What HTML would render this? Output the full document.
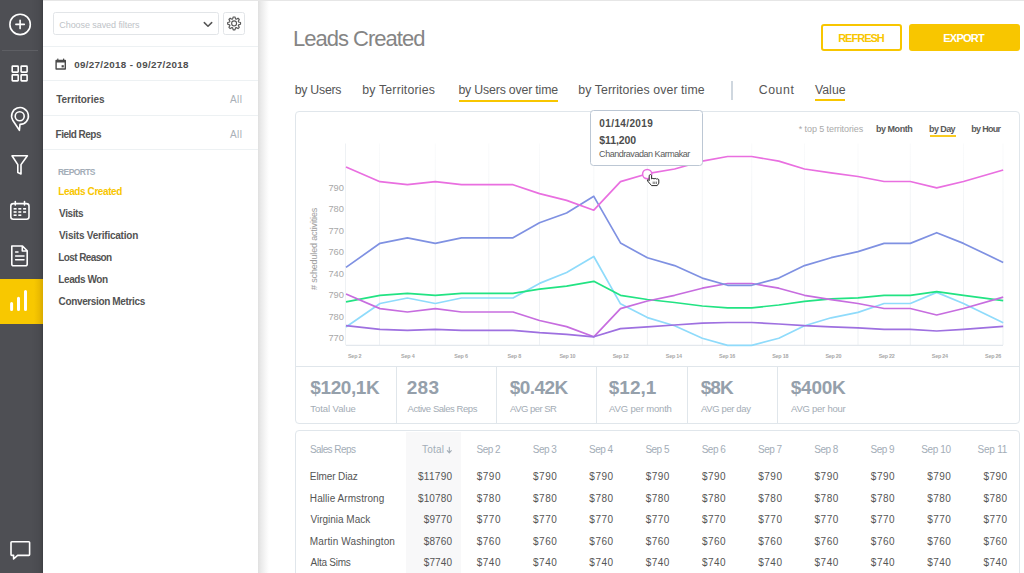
<!DOCTYPE html>
<html><head><meta charset="utf-8"><title>Leads Created</title>
<style>
html,body{margin:0;padding:0;}
body{width:1024px;height:573px;overflow:hidden;position:relative;background:#ffffff;font-family:"Liberation Sans",sans-serif;}
.a{position:absolute;box-sizing:border-box;}
.t{position:absolute;line-height:20px;white-space:pre;font-family:"Liberation Sans",sans-serif;}
svg{position:absolute;left:0;top:0;overflow:visible;}
</style></head><body>
<!-- sidebar panel shadow -->
<div class="a" style="left:258px;top:0;width:11px;height:573px;background:linear-gradient(to right,#e0e0e0,#ebebeb 30%,#f7f7f7 70%,#ffffff)"></div>
<!-- top hairline -->
<div class="a" style="left:0;top:0;width:1024px;height:1px;background:#e6e6e6"></div>
<!-- rail -->
<div class="a" style="left:0;top:0;width:43px;height:573px;background:linear-gradient(to right,#4e4f54 0,#4e4f54 31px,#4a4b50 39px,#454649 41.5px,#3f4045 42.5px,#4a4b50 43px)"></div>
<div class="a" style="left:2px;top:49.5px;width:36px;height:1px;background:#5e5f64"></div>
<div class="a" style="left:0;top:279px;width:43px;height:45px;background:linear-gradient(to right,#f8c800 0,#f8c800 34px,#ecbc00 39px,#dcad00 42.5px,#e8c040 43px)"></div>
<!-- select + gear -->
<div class="a" style="left:53.3px;top:12.2px;width:165.4px;height:22.8px;border:1px solid #e2e5e8;border-radius:2.5px"></div>
<div class="a" style="left:222.5px;top:12.2px;width:22.2px;height:22.7px;border:1px solid #e2e5e8;border-radius:2.5px"></div>
<!-- sidebar dividers -->
<div class="a" style="left:43px;top:46px;width:215px;height:1px;background:#edf1f3"></div>
<div class="a" style="left:43px;top:80.3px;width:215px;height:1px;background:#edf1f3"></div>
<div class="a" style="left:43px;top:115.3px;width:215px;height:1px;background:#edf1f3"></div>
<div class="a" style="left:43px;top:149.3px;width:215px;height:1px;background:#edf1f3"></div>
<!-- buttons -->
<div class="a" style="left:821px;top:24px;width:81px;height:27px;border:2px solid #f8c600;border-radius:3px"></div>
<div class="a" style="left:909px;top:24px;width:111px;height:27px;background:#f8c600;border-radius:3px"></div>
<!-- tab underlines + separator -->
<div class="a" style="left:459.2px;top:99.5px;width:98.4px;height:2.2px;background:#f8c600"></div>
<div class="a" style="left:929.6px;top:135.3px;width:26px;height:1.5px;background:#f9cb20"></div>
<div class="a" style="left:814.9px;top:99.3px;width:30.2px;height:2.2px;background:#f8c600"></div>
<div class="a" style="left:731.4px;top:81px;width:1.3px;height:19px;background:#cfd7df"></div>
<!-- chart + stats card -->
<div class="a" style="left:295.3px;top:111px;width:724.4px;height:313px;border:1.2px solid #e0e6eb;border-radius:4px"></div>
<div class="a" style="left:296px;top:366px;width:723px;height:1px;background:#e0e6eb"></div>
<div class="a" style="left:396px;top:366px;width:1px;height:57px;background:#e0e6eb"></div>
<div class="a" style="left:496.3px;top:366px;width:1px;height:57px;background:#e0e6eb"></div>
<div class="a" style="left:596px;top:366px;width:1px;height:57px;background:#e0e6eb"></div>
<div class="a" style="left:687px;top:366px;width:1px;height:57px;background:#e0e6eb"></div>
<div class="a" style="left:777px;top:366px;width:1px;height:57px;background:#e0e6eb"></div>
<!-- table card -->
<div class="a" style="left:295.3px;top:430px;width:724.4px;height:160px;border:1.2px solid #e0e6eb;border-radius:4px"></div>
<div class="a" style="left:406.2px;top:431.5px;width:54.7px;height:142px;background:#f8f8f9"></div>
<!-- chart svg -->
<svg width="1024" height="573" viewBox="0 0 1024 573">
 <defs><linearGradient id="gg" gradientUnits="userSpaceOnUse" x1="0" y1="143" x2="0" y2="230"><stop offset="0" stop-color="#f2f4f6" stop-opacity="0.4"/><stop offset="1" stop-color="#eef1f4"/></linearGradient></defs>
 <g stroke="url(#gg)" stroke-width="1"><rect x="379.0" y="143.5" width="1" height="201.5" fill="url(#gg)" stroke="none"/><rect x="434.8" y="143.5" width="1" height="201.5" fill="url(#gg)" stroke="none"/><rect x="488.3" y="143.5" width="1" height="201.5" fill="url(#gg)" stroke="none"/><rect x="539.0" y="143.5" width="1" height="201.5" fill="url(#gg)" stroke="none"/><rect x="593.3" y="143.5" width="1" height="201.5" fill="url(#gg)" stroke="none"/><rect x="646.9" y="143.5" width="1" height="201.5" fill="url(#gg)" stroke="none"/><rect x="701.8" y="143.5" width="1" height="201.5" fill="url(#gg)" stroke="none"/><rect x="751.2" y="143.5" width="1" height="201.5" fill="url(#gg)" stroke="none"/><rect x="804.0" y="143.5" width="1" height="201.5" fill="url(#gg)" stroke="none"/><rect x="857.5" y="143.5" width="1" height="201.5" fill="url(#gg)" stroke="none"/><rect x="909.8" y="143.5" width="1" height="201.5" fill="url(#gg)" stroke="none"/><rect x="963.0" y="143.5" width="1" height="201.5" fill="url(#gg)" stroke="none"/><rect x="1002.5" y="143.5" width="1" height="201.5" fill="url(#gg)" stroke="none"/></g>
 <line x1="345.5" y1="143.5" x2="345.5" y2="345.3" stroke="#eef1f4" stroke-width="1"/>
 <line x1="346" y1="345.3" x2="1003" y2="345.3" stroke="#e3e8ed" stroke-width="1.2"/>
 <polyline fill="none" stroke="#8fdbfb" stroke-width="1.7" stroke-linejoin="round" points="346,327 380,303.5 407.4,298 435.3,303.5 461.5,298 488.8,298 513,298 539.5,283.4 566.6,272.5 593.8,256.5 620.5,303.8 647.4,317.6 674.6,325.7 702.3,338.3 727.6,345.4 751.7,345.4 778.8,338.3 804.5,325.7 831.1,317.8 858,312.4 884.1,303.5 910.3,303.5 936.7,292.4 963.5,303.5 1003.2,322.8"/><polyline fill="none" stroke="#22e383" stroke-width="1.7" stroke-linejoin="round" points="346,301.8 380,295.4 407.4,293.3 435.3,295.4 461.5,293.3 488.8,293.3 513,293.3 539.5,289.2 566.6,286.1 593.8,281.3 620.5,295.3 647.4,299.5 674.6,302.5 702.3,306 727.6,307.8 751.7,307.8 778.8,305 804.5,301.4 831.1,298.8 858,297.8 884.1,295.3 910.3,295.3 936.7,291.7 963.5,295.3 1003.2,300.6"/><polyline fill="none" stroke="#c76ddf" stroke-width="1.7" stroke-linejoin="round" points="346,294 380,308.6 407.4,312 435.3,308.6 461.5,312 488.8,312 513,312 539.5,320.5 566.6,326.6 593.8,336.8 620.5,308.6 647.4,301 674.6,295.3 702.3,288.2 727.6,283.5 751.7,283.5 778.8,288.2 804.5,295.3 831.1,299.6 858,303.5 884.1,308.5 910.3,308.5 936.7,315 963.5,308.5 1003.2,297.1"/><polyline fill="none" stroke="#9e70e0" stroke-width="1.7" stroke-linejoin="round" points="346,325.7 380,329.4 407.4,330.4 435.3,329.4 461.5,330.4 488.8,330.4 513,330.3 539.5,332.7 566.6,334.4 593.8,336.8 620.5,328.6 647.4,326.9 674.6,325 702.3,323.2 727.6,322.5 751.7,322.5 778.8,324 804.5,325.7 831.1,326.8 858,327.8 884.1,329.3 910.3,329.3 936.7,331 963.5,329.3 1003.2,326.4"/><polyline fill="none" stroke="#7f91e2" stroke-width="1.7" stroke-linejoin="round" points="346,267.4 380,243.3 407.4,237.8 435.3,243.3 461.5,237.8 488.8,237.8 513,237.8 539.5,222.8 566.6,213 593.8,196.3 620.5,242.9 647.4,257.8 674.6,265.6 702.3,278.1 727.6,285.3 751.7,285.3 778.8,278.1 804.5,265.6 831.1,257.7 858,251.6 884.1,243.4 910.3,243.4 936.7,232.7 963.5,243.4 1003.2,262.4"/><polyline fill="none" stroke="#e96fe0" stroke-width="1.7" stroke-linejoin="round" points="346,167 380,181.7 407.4,184.7 435.3,181.7 461.5,184.7 488.8,184.7 513,184.7 539.5,193.6 566.6,200.4 593.8,210.2 620.5,181.6 647.4,173.7 674.6,169 702.3,161.1 727.6,156.5 751.7,156.5 778.8,161.1 804.5,169 831.1,172.9 858,176.5 884.1,181.5 910.3,181.5 936.7,187.9 963.5,181.5 1003.2,170"/>
 <circle cx="647.2" cy="174.1" r="4.6" fill="#ffffff" stroke="#e96fe0" stroke-width="1.5"/>
 <!-- cursor hand -->
 <g stroke="#2a2a2a" stroke-width="1" fill="#fff" stroke-linejoin="round">
  <path d="M649.2 175.4 Q650.4 173.6 651.6 175.4 L651.6 178.9 Q652.8 177.7 654 178.9 Q655.2 177.9 656.4 179 Q657.9 178.4 658.8 179.6 L658.8 183.2 L657.2 185.6 L651.6 185.6 L647.5 180.9 Q647 179.3 648.6 179.9 L649.2 180.6 Z"/>
  <path d="M653.2 181.6 V184 M654.8 181.6 V184 M656.4 181.6 V184" stroke-width="0.8" stroke="#555"/>
 </g>
</svg>
<!-- tooltip -->
<div class="a" style="left:590.3px;top:109.5px;width:112.4px;height:56.3px;background:#fff;border:1px solid #bcc7d4;border-radius:3.5px"></div>
<!-- icons -->
<svg width="1024" height="573" viewBox="0 0 1024 573">
 <g fill="none" stroke="#ffffff" stroke-width="1.6" stroke-linecap="round" stroke-linejoin="round">
  <circle cx="20.1" cy="24.4" r="10.2"/>
  <path d="M20.1 20.2 V28.6 M15.9 24.4 H24.3"/>
  <rect x="12.2" y="66.1" width="6" height="6" rx="0.6"/>
  <rect x="21.1" y="66.1" width="6" height="6" rx="0.6"/>
  <rect x="12.2" y="74.9" width="6" height="6" rx="0.6"/>
  <rect x="21.1" y="74.9" width="6" height="6" rx="0.6"/>
  <path d="M19.4 130.3 L20 124.4 A8.4 8.4 0 1 0 12.73 120.2 Z"/>
  <circle cx="19.7" cy="116.2" r="4.5"/>
  <path d="M12 155.8 H27.4 L21 164.6 V174 L17.8 172.6 V164.6 Z"/>
  <rect x="10.8" y="203.6" width="18.2" height="15.6" rx="2.5"/>
  <path d="M15.3 201.6 V205 M24.5 201.6 V205"/>
  <path d="M11.8 246 H22.5 L27.2 250.7 V264.2 A1.6 1.6 0 0 1 25.6 265.8 H13.4 A1.6 1.6 0 0 1 11.8 264.2 Z M22.3 246 V251 H27"/>
  <path d="M15.6 252 H18 M15.6 256 H24 M15.6 259.8 H24" stroke-width="1.5"/>
  <path d="M11.6 303.6 V309.6 M18.5 298.3 V309.6 M25.5 291.5 V309.6" stroke-width="3" />
  <path d="M12.6 541.8 H28.8 A0.8 0.8 0 0 1 29.6 542.6 V554.6 A0.8 0.8 0 0 1 28.8 555.4 H17.6 L13.6 559 V555.4 H11.8 A0.8 0.8 0 0 1 11 554.6 V542.6 A0.8 0.8 0 0 1 11.8 541.8 Z"/>
 </g>
 <g fill="#ffffff"><rect x="13.6" y="208.0" width="3" height="1.6"/><rect x="18.3" y="208.0" width="3" height="1.6"/><rect x="23.1" y="208.0" width="3" height="1.6"/><rect x="13.6" y="211.2" width="3" height="1.6"/><rect x="18.3" y="211.2" width="3" height="1.6"/><rect x="23.1" y="211.2" width="3" height="1.6"/><rect x="13.6" y="214.4" width="3" height="1.6"/><rect x="18.3" y="214.4" width="3" height="1.6"/></g>
 <path d="M449.3 447.3 V452.6 M447.3 450.6 L449.3 452.8 L451.3 450.6" fill="none" stroke="#a3adb7" stroke-width="1.1" stroke-linecap="round" stroke-linejoin="round"/>
 <!-- chevron -->
 <path d="M204.3 22.6 L208 26.3 L211.7 22.6" fill="none" stroke="#555" stroke-width="1.5" stroke-linecap="round" stroke-linejoin="round"/>
 <!-- gear -->
 <g transform="translate(234.1,23.4) scale(0.94)" fill="none" stroke="#585858" stroke-width="1.25" stroke-linejoin="round">
  <path d="M-1.53 -4.76 L-0.96 -6.83 L0.96 -6.83 L1.53 -4.76 L2.29 -4.45 L4.15 -5.51 L5.51 -4.15 L4.45 -2.29 L4.76 -1.53 L6.83 -0.96 L6.83 0.96 L4.76 1.53 L4.45 2.29 L5.51 4.15 L4.15 5.51 L2.29 4.45 L1.53 4.76 L0.96 6.83 L-0.96 6.83 L-1.53 4.76 L-2.29 4.45 L-4.15 5.51 L-5.51 4.15 L-4.45 2.29 L-4.76 1.53 L-6.83 0.96 L-6.83 -0.96 L-4.76 -1.53 L-4.45 -2.29 L-5.51 -4.15 L-4.15 -5.51 L-2.29 -4.45 Z"/>
  <circle r="2.6"/>
 </g>
 <!-- calendar -->
 <g fill="#4a4a4a">
  <path d="M56.2 59.7 H65.2 A0.8 0.8 0 0 1 66 60.5 V68.9 A0.8 0.8 0 0 1 65.2 69.7 H56.2 A0.8 0.8 0 0 1 55.4 68.9 V60.5 A0.8 0.8 0 0 1 56.2 59.7 Z M56.8 62.6 V68.3 H64.6 V62.6 Z"/>
  <rect x="57.2" y="58.6" width="1.2" height="1.5"/><rect x="63" y="58.6" width="1.2" height="1.5"/>
  <rect x="61.6" y="65.2" width="2.2" height="2.2"/>
 </g>
</svg>
<span class="t" style="left:59.30px;top:14.98px;font-size:9px;color:#bec3c7;letter-spacing:-0.071px">Choose saved filters</span>
<span class="t" style="left:74.15px;top:55.00px;font-size:9.8px;color:#4e4e4e;font-weight:700;letter-spacing:0.343px">09/27/2018 - 09/27/2018</span>
<span class="t" style="left:56.30px;top:89.94px;font-size:10px;color:#535353;font-weight:700;letter-spacing:-0.055px">Territories</span>
<span class="t" style="left:230.00px;top:89.94px;font-size:10px;color:#a9b0b7;letter-spacing:0.450px">All</span>
<span class="t" style="left:55.55px;top:125.03px;font-size:10px;color:#535353;font-weight:700;letter-spacing:-0.511px">Field Reps</span>
<span class="t" style="left:230.00px;top:125.03px;font-size:10px;color:#a9b0b7;letter-spacing:0.450px">All</span>
<span class="t" style="left:58.10px;top:161.85px;font-size:8.5px;color:#a3adb7;font-weight:700;letter-spacing:-0.625px">REPORTS</span>
<span class="t" style="left:58.35px;top:182.23px;font-size:10px;color:#f8c600;font-weight:700;letter-spacing:-0.408px">Leads Created</span>
<span class="t" style="left:59.10px;top:204.44px;font-size:10px;color:#535353;font-weight:700;letter-spacing:-0.400px">Visits</span>
<span class="t" style="left:59.10px;top:226.44px;font-size:10px;color:#535353;font-weight:700;letter-spacing:-0.222px">Visits Verification</span>
<span class="t" style="left:58.35px;top:248.43px;font-size:10px;color:#535353;font-weight:700;letter-spacing:-0.615px">Lost Reason</span>
<span class="t" style="left:58.35px;top:269.94px;font-size:10px;color:#535353;font-weight:700;letter-spacing:-0.419px">Leads Won</span>
<span class="t" style="left:58.60px;top:291.94px;font-size:10px;color:#535353;font-weight:700;letter-spacing:-0.365px">Conversion Metrics</span>
<span class="t" style="left:293.05px;top:28.98px;font-size:22px;color:#858585;letter-spacing:-0.996px">Leads Created</span>
<span class="t" style="left:838.15px;top:28.19px;font-size:11px;color:#f8c600;font-weight:700;letter-spacing:-0.983px">REFRESH</span>
<span class="t" style="left:943.25px;top:28.19px;font-size:11px;color:#ffffff;font-weight:700;letter-spacing:-0.740px">EXPORT</span>
<span class="t" style="left:294.65px;top:79.54px;font-size:12.3px;color:#555555;letter-spacing:-0.236px">by Users</span>
<span class="t" style="left:362.15px;top:79.54px;font-size:12.3px;color:#555555;letter-spacing:0.204px">by Territories</span>
<span class="t" style="left:458.45px;top:79.54px;font-size:12.3px;color:#555555;letter-spacing:-0.168px">by Users over time</span>
<span class="t" style="left:578.25px;top:79.54px;font-size:12.3px;color:#555555;letter-spacing:0.096px">by Territories over time</span>
<span class="t" style="left:758.70px;top:79.54px;font-size:12.3px;color:#555555;letter-spacing:0.588px">Count</span>
<span class="t" style="left:814.90px;top:79.54px;font-size:12.3px;color:#555555;letter-spacing:0.050px">Value</span>
<span class="t" style="left:798.75px;top:118.78px;font-size:9px;color:#aaaaaa;letter-spacing:-0.089px">* top 5 territories</span>
<span class="t" style="left:876.00px;top:118.78px;font-size:9px;color:#5a5a5a;font-weight:700;letter-spacing:-0.471px">by Month</span>
<span class="t" style="left:929.10px;top:118.78px;font-size:9px;color:#5a5a5a;font-weight:700;letter-spacing:-0.600px">by Day</span>
<span class="t" style="left:971.30px;top:118.78px;font-size:9px;color:#5a5a5a;font-weight:700;letter-spacing:-0.700px">by Hour</span>
<span class="t" style="left:328.40px;top:177.78px;font-size:9.3px;color:#a8a8a8;letter-spacing:-0.025px">790</span>
<span class="t" style="left:328.40px;top:199.28px;font-size:9.3px;color:#a8a8a8;letter-spacing:-0.025px">780</span>
<span class="t" style="left:328.40px;top:220.78px;font-size:9.3px;color:#a8a8a8;letter-spacing:-0.025px">770</span>
<span class="t" style="left:328.40px;top:242.28px;font-size:9.3px;color:#a8a8a8;letter-spacing:-0.025px">760</span>
<span class="t" style="left:328.40px;top:263.78px;font-size:9.3px;color:#a8a8a8;letter-spacing:-0.025px">740</span>
<span class="t" style="left:328.40px;top:285.28px;font-size:9.3px;color:#a8a8a8;letter-spacing:-0.025px">790</span>
<span class="t" style="left:328.40px;top:306.78px;font-size:9.3px;color:#a8a8a8;letter-spacing:-0.025px">780</span>
<span class="t" style="left:328.40px;top:328.28px;font-size:9.3px;color:#a8a8a8;letter-spacing:-0.025px">770</span>
<span class="t" style="left:347.90px;top:346.23px;font-size:5.4px;color:#a8a8a8;font-weight:700;letter-spacing:-0.175px">Sep 2</span>
<span class="t" style="left:401.10px;top:346.23px;font-size:5.4px;color:#a8a8a8;font-weight:700;letter-spacing:-0.175px">Sep 4</span>
<span class="t" style="left:454.30px;top:346.23px;font-size:5.4px;color:#a8a8a8;font-weight:700;letter-spacing:-0.175px">Sep 6</span>
<span class="t" style="left:507.50px;top:346.23px;font-size:5.4px;color:#a8a8a8;font-weight:700;letter-spacing:-0.175px">Sep 8</span>
<span class="t" style="left:559.45px;top:346.23px;font-size:5.4px;color:#a8a8a8;font-weight:700;letter-spacing:-0.240px">Sep 10</span>
<span class="t" style="left:612.65px;top:346.23px;font-size:5.4px;color:#a8a8a8;font-weight:700;letter-spacing:-0.240px">Sep 12</span>
<span class="t" style="left:665.85px;top:346.23px;font-size:5.4px;color:#a8a8a8;font-weight:700;letter-spacing:-0.240px">Sep 14</span>
<span class="t" style="left:719.05px;top:346.23px;font-size:5.4px;color:#a8a8a8;font-weight:700;letter-spacing:-0.240px">Sep 16</span>
<span class="t" style="left:772.25px;top:346.23px;font-size:5.4px;color:#a8a8a8;font-weight:700;letter-spacing:-0.240px">Sep 18</span>
<span class="t" style="left:825.45px;top:346.23px;font-size:5.4px;color:#a8a8a8;font-weight:700;letter-spacing:-0.240px">Sep 20</span>
<span class="t" style="left:878.65px;top:346.23px;font-size:5.4px;color:#a8a8a8;font-weight:700;letter-spacing:-0.240px">Sep 22</span>
<span class="t" style="left:931.85px;top:346.23px;font-size:5.4px;color:#a8a8a8;font-weight:700;letter-spacing:-0.240px">Sep 24</span>
<span class="t" style="left:985.05px;top:346.23px;font-size:5.4px;color:#a8a8a8;font-weight:700;letter-spacing:-0.240px">Sep 26</span>
<span class="t" style="left:303.98px;top:289.80px;font-size:9px;color:#9c9c9c;letter-spacing:-0.155px;transform:rotate(-90deg);transform-origin:0 0"># scheduled activities</span>
<span class="t" style="left:599.35px;top:114.03px;font-size:10px;color:#4c4c4c;font-weight:700;letter-spacing:0.378px">01/14/2019</span>
<span class="t" style="left:599.35px;top:130.16px;font-size:10.5px;color:#4c4c4c;font-weight:700;letter-spacing:-0.125px">$11,200</span>
<span class="t" style="left:599.10px;top:144.38px;font-size:9px;color:#5a5a5a;letter-spacing:-0.465px">Chandravadan Karmakar</span>
<span class="t" style="left:310.35px;top:377.82px;font-size:19px;color:#95a0ab;font-weight:700;letter-spacing:-0.425px">$120,1K</span>
<span class="t" style="left:310.35px;top:399.21px;font-size:9.5px;color:#a3acb5;letter-spacing:-0.075px">Total Value</span>
<span class="t" style="left:406.75px;top:377.82px;font-size:19px;color:#95a0ab;font-weight:700;letter-spacing:0.275px">283</span>
<span class="t" style="left:407.50px;top:399.21px;font-size:9.5px;color:#a3acb5;letter-spacing:-0.447px">Active Sales Reps</span>
<span class="t" style="left:509.85px;top:377.82px;font-size:19px;color:#95a0ab;font-weight:700;letter-spacing:-0.590px">$0.42K</span>
<span class="t" style="left:510.10px;top:399.21px;font-size:9.5px;color:#a3acb5;letter-spacing:-0.522px">AVG per SR</span>
<span class="t" style="left:608.85px;top:377.82px;font-size:19px;color:#95a0ab;font-weight:700;letter-spacing:-0.037px">$12,1</span>
<span class="t" style="left:609.10px;top:399.21px;font-size:9.5px;color:#a3acb5;letter-spacing:-0.163px">AVG per month</span>
<span class="t" style="left:700.75px;top:377.82px;font-size:19px;color:#95a0ab;font-weight:700;letter-spacing:-0.975px">$8K</span>
<span class="t" style="left:701.00px;top:399.21px;font-size:9.5px;color:#a3acb5;letter-spacing:-0.375px">AVG per day</span>
<span class="t" style="left:790.75px;top:377.82px;font-size:19px;color:#95a0ab;font-weight:700;letter-spacing:-0.225px">$400K</span>
<span class="t" style="left:791.00px;top:399.21px;font-size:9.5px;color:#a3acb5;letter-spacing:-0.241px">AVG per hour</span>
<span class="t" style="left:309.90px;top:439.54px;font-size:10px;color:#a3adb7;letter-spacing:-0.572px">Sales Reps</span>
<span class="t" style="left:421.95px;top:439.54px;font-size:10px;color:#a3adb7;letter-spacing:0.237px">Total</span>
<span class="t" style="left:476.50px;top:439.54px;font-size:10px;color:#a3adb7;letter-spacing:-0.513px">Sep 2</span>
<span class="t" style="left:532.80px;top:439.54px;font-size:10px;color:#a3adb7;letter-spacing:-0.513px">Sep 3</span>
<span class="t" style="left:589.10px;top:439.54px;font-size:10px;color:#a3adb7;letter-spacing:-0.513px">Sep 4</span>
<span class="t" style="left:645.40px;top:439.54px;font-size:10px;color:#a3adb7;letter-spacing:-0.513px">Sep 5</span>
<span class="t" style="left:701.70px;top:439.54px;font-size:10px;color:#a3adb7;letter-spacing:-0.513px">Sep 6</span>
<span class="t" style="left:758.00px;top:439.54px;font-size:10px;color:#a3adb7;letter-spacing:-0.513px">Sep 7</span>
<span class="t" style="left:814.30px;top:439.54px;font-size:10px;color:#a3adb7;letter-spacing:-0.513px">Sep 8</span>
<span class="t" style="left:870.60px;top:439.54px;font-size:10px;color:#a3adb7;letter-spacing:-0.513px">Sep 9</span>
<span class="t" style="left:921.30px;top:439.54px;font-size:10px;color:#a3adb7;letter-spacing:-0.390px">Sep 10</span>
<span class="t" style="left:977.60px;top:439.54px;font-size:10px;color:#a3adb7;letter-spacing:-0.240px">Sep 11</span>
<span class="t" style="left:309.85px;top:466.64px;font-size:10px;color:#555555;letter-spacing:-0.106px">Elmer Diaz</span>
<span class="t" style="left:417.95px;top:466.64px;font-size:10px;color:#555555;letter-spacing:0.300px">$11790</span>
<span class="t" style="left:476.75px;top:466.64px;font-size:10px;color:#555555;letter-spacing:0.483px">$790</span>
<span class="t" style="left:533.05px;top:466.64px;font-size:10px;color:#555555;letter-spacing:0.483px">$790</span>
<span class="t" style="left:589.35px;top:466.64px;font-size:10px;color:#555555;letter-spacing:0.483px">$790</span>
<span class="t" style="left:645.65px;top:466.64px;font-size:10px;color:#555555;letter-spacing:0.483px">$790</span>
<span class="t" style="left:701.95px;top:466.64px;font-size:10px;color:#555555;letter-spacing:0.483px">$790</span>
<span class="t" style="left:758.25px;top:466.64px;font-size:10px;color:#555555;letter-spacing:0.483px">$790</span>
<span class="t" style="left:814.55px;top:466.64px;font-size:10px;color:#555555;letter-spacing:0.483px">$790</span>
<span class="t" style="left:870.85px;top:466.64px;font-size:10px;color:#555555;letter-spacing:0.483px">$790</span>
<span class="t" style="left:927.15px;top:466.64px;font-size:10px;color:#555555;letter-spacing:0.483px">$790</span>
<span class="t" style="left:983.45px;top:466.64px;font-size:10px;color:#555555;letter-spacing:0.483px">$790</span>
<span class="t" style="left:309.85px;top:488.54px;font-size:10px;color:#555555;letter-spacing:0.067px">Hallie Armstrong</span>
<span class="t" style="left:417.95px;top:488.54px;font-size:10px;color:#555555;letter-spacing:0.150px">$10780</span>
<span class="t" style="left:476.75px;top:488.54px;font-size:10px;color:#555555;letter-spacing:0.483px">$780</span>
<span class="t" style="left:533.05px;top:488.54px;font-size:10px;color:#555555;letter-spacing:0.483px">$780</span>
<span class="t" style="left:589.35px;top:488.54px;font-size:10px;color:#555555;letter-spacing:0.483px">$780</span>
<span class="t" style="left:645.65px;top:488.54px;font-size:10px;color:#555555;letter-spacing:0.483px">$780</span>
<span class="t" style="left:701.95px;top:488.54px;font-size:10px;color:#555555;letter-spacing:0.483px">$780</span>
<span class="t" style="left:758.25px;top:488.54px;font-size:10px;color:#555555;letter-spacing:0.483px">$780</span>
<span class="t" style="left:814.55px;top:488.54px;font-size:10px;color:#555555;letter-spacing:0.483px">$780</span>
<span class="t" style="left:870.85px;top:488.54px;font-size:10px;color:#555555;letter-spacing:0.483px">$780</span>
<span class="t" style="left:927.15px;top:488.54px;font-size:10px;color:#555555;letter-spacing:0.483px">$780</span>
<span class="t" style="left:983.45px;top:488.54px;font-size:10px;color:#555555;letter-spacing:0.483px">$780</span>
<span class="t" style="left:310.60px;top:509.83px;font-size:10px;color:#555555;letter-spacing:-0.021px">Virginia Mack</span>
<span class="t" style="left:423.75px;top:509.83px;font-size:10px;color:#555555;letter-spacing:0.112px">$9770</span>
<span class="t" style="left:476.75px;top:509.83px;font-size:10px;color:#555555;letter-spacing:0.483px">$770</span>
<span class="t" style="left:533.05px;top:509.83px;font-size:10px;color:#555555;letter-spacing:0.483px">$770</span>
<span class="t" style="left:589.35px;top:509.83px;font-size:10px;color:#555555;letter-spacing:0.483px">$770</span>
<span class="t" style="left:645.65px;top:509.83px;font-size:10px;color:#555555;letter-spacing:0.483px">$770</span>
<span class="t" style="left:701.95px;top:509.83px;font-size:10px;color:#555555;letter-spacing:0.483px">$770</span>
<span class="t" style="left:758.25px;top:509.83px;font-size:10px;color:#555555;letter-spacing:0.483px">$770</span>
<span class="t" style="left:814.55px;top:509.83px;font-size:10px;color:#555555;letter-spacing:0.483px">$770</span>
<span class="t" style="left:870.85px;top:509.83px;font-size:10px;color:#555555;letter-spacing:0.483px">$770</span>
<span class="t" style="left:927.15px;top:509.83px;font-size:10px;color:#555555;letter-spacing:0.483px">$770</span>
<span class="t" style="left:983.45px;top:509.83px;font-size:10px;color:#555555;letter-spacing:0.483px">$770</span>
<span class="t" style="left:309.85px;top:531.74px;font-size:10px;color:#555555;letter-spacing:0.128px">Martin Washington</span>
<span class="t" style="left:423.75px;top:531.74px;font-size:10px;color:#555555;letter-spacing:0.112px">$8760</span>
<span class="t" style="left:476.75px;top:531.74px;font-size:10px;color:#555555;letter-spacing:0.483px">$760</span>
<span class="t" style="left:533.05px;top:531.74px;font-size:10px;color:#555555;letter-spacing:0.483px">$760</span>
<span class="t" style="left:589.35px;top:531.74px;font-size:10px;color:#555555;letter-spacing:0.483px">$760</span>
<span class="t" style="left:645.65px;top:531.74px;font-size:10px;color:#555555;letter-spacing:0.483px">$760</span>
<span class="t" style="left:701.95px;top:531.74px;font-size:10px;color:#555555;letter-spacing:0.483px">$760</span>
<span class="t" style="left:758.25px;top:531.74px;font-size:10px;color:#555555;letter-spacing:0.483px">$760</span>
<span class="t" style="left:814.55px;top:531.74px;font-size:10px;color:#555555;letter-spacing:0.483px">$760</span>
<span class="t" style="left:870.85px;top:531.74px;font-size:10px;color:#555555;letter-spacing:0.483px">$760</span>
<span class="t" style="left:927.15px;top:531.74px;font-size:10px;color:#555555;letter-spacing:0.483px">$760</span>
<span class="t" style="left:983.45px;top:531.74px;font-size:10px;color:#555555;letter-spacing:0.483px">$760</span>
<span class="t" style="left:310.60px;top:553.13px;font-size:10px;color:#555555;letter-spacing:-0.250px">Alta Sims</span>
<span class="t" style="left:423.75px;top:553.13px;font-size:10px;color:#555555;letter-spacing:0.112px">$7740</span>
<span class="t" style="left:476.75px;top:553.13px;font-size:10px;color:#555555;letter-spacing:0.483px">$740</span>
<span class="t" style="left:533.05px;top:553.13px;font-size:10px;color:#555555;letter-spacing:0.483px">$740</span>
<span class="t" style="left:589.35px;top:553.13px;font-size:10px;color:#555555;letter-spacing:0.483px">$740</span>
<span class="t" style="left:645.65px;top:553.13px;font-size:10px;color:#555555;letter-spacing:0.483px">$740</span>
<span class="t" style="left:701.95px;top:553.13px;font-size:10px;color:#555555;letter-spacing:0.483px">$740</span>
<span class="t" style="left:758.25px;top:553.13px;font-size:10px;color:#555555;letter-spacing:0.483px">$740</span>
<span class="t" style="left:814.55px;top:553.13px;font-size:10px;color:#555555;letter-spacing:0.483px">$740</span>
<span class="t" style="left:870.85px;top:553.13px;font-size:10px;color:#555555;letter-spacing:0.483px">$740</span>
<span class="t" style="left:927.15px;top:553.13px;font-size:10px;color:#555555;letter-spacing:0.483px">$740</span>
<span class="t" style="left:983.45px;top:553.13px;font-size:10px;color:#555555;letter-spacing:0.483px">$740</span>
</body></html>
